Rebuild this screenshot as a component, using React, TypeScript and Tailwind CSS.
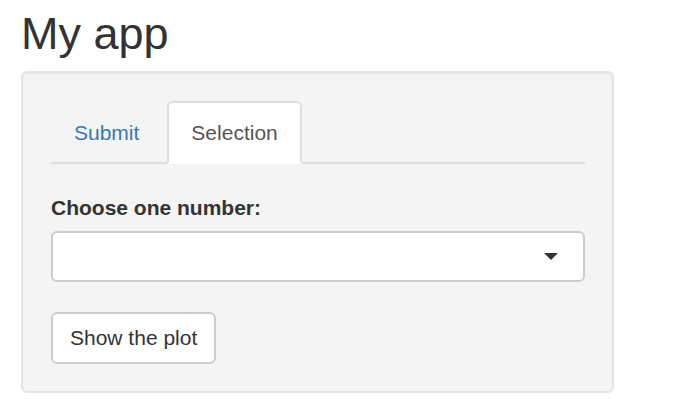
import React from "react";

export default function App() {
  return (
    <div
      className="w-[681px] h-[399px] overflow-hidden bg-white text-[#333333]"
      style={{ fontFamily: '"Liberation Sans", Arial, sans-serif' }}
    >
      <div className="pl-[21px] pt-[9px]">
        <h2 className="text-[45px] leading-[49.5px] font-normal m-0">My app</h2>
        <div className="mt-[12px] w-[593px] h-[322px] bg-[#f4f4f4] border-2 border-[#e4e4e4] rounded-[6px] shadow-[inset_0_1px_2px_rgba(0,0,0,0.05)] pl-[28px] pr-[27px] pt-[28px] flex flex-col">
          <ul className="flex border-b-2 border-[#dedede]">
            <li className="mr-[3px] -mb-[2px]">
              <a className="block pl-[21px] pr-[23px] pt-[15px] pb-[14px] text-[21px] leading-[30px] text-[#337ab7] border-2 border-transparent rounded-t-[6px]">
                Submit
              </a>
            </li>
            <li className="-mb-[2px]">
              <a className="block px-[22px] pt-[15px] pb-[14px] text-[21px] leading-[30px] text-[#555555] bg-white border-2 border-[#dedede] border-b-transparent rounded-t-[6px]">
                Selection
              </a>
            </li>
          </ul>
          <label className="mt-[29px] mb-[8px] block text-[21px] leading-[30px] font-bold">
            Choose one number:
          </label>
          <div className="relative h-[51px] bg-white border-2 border-[#cccccc] rounded-[6px] flex items-center justify-end pr-[25px]">
            <span className="block w-0 h-0 border-l-[7.5px] border-r-[7.5px] border-t-[7.5px] border-l-transparent border-r-transparent border-t-[#333333]" />
          </div>
          <div className="mt-[30px]">
            <button className="bg-white border-2 border-[#cccccc] rounded-[6px] px-[17px] py-[9px] text-[21px] leading-[30px] text-[#333333]">
              Show the plot
            </button>
          </div>
        </div>
      </div>
    </div>
  );
}
